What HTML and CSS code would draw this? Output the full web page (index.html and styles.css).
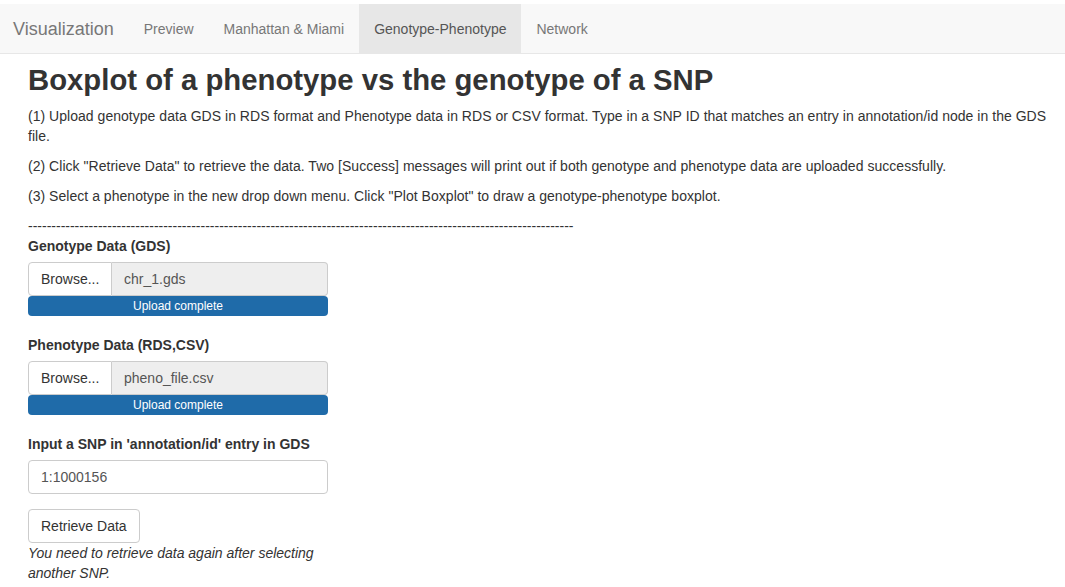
FILE: index.html
```html
<!DOCTYPE html>
<html>
<head>
<meta charset="utf-8">
<link rel="stylesheet" href="styles.css">
</head>
<body>
<nav class="navbar">
  <span class="brand">Visualization</span>
  <ul class="nav">
    <li><a>Preview</a></li>
    <li><a>Manhattan &amp; Miami</a></li>
    <li class="active"><a>Genotype-Phenotype</a></li>
    <li><a>Network</a></li>
  </ul>
</nav>
<main class="content">
  <h2 class="title">Boxplot of a phenotype vs the genotype of a SNP</h2>
  <p>(1) Upload genotype data GDS in RDS format and Phenotype data in RDS or CSV format. Type in a SNP ID that matches an entry in annotation/id node in the GDS file.</p>
  <p>(2) Click "Retrieve Data" to retrieve the data. Two [Success] messages will print out if both genotype and phenotype data are uploaded successfully.</p>
  <p>(3) Select a phenotype in the new drop down menu. Click "Plot Boxplot" to draw a genotype-phenotype boxplot.</p>
  <div class="dashes">---------------------------------------------------------------------------------------------------------------------</div>
  <div class="form-group">
    <label class="lbl">Genotype Data (GDS)</label>
    <div class="file-group">
      <span class="browse">Browse...</span>
      <span class="file-name">chr_1.gds</span>
    </div>
    <div class="progress">Upload complete</div>
  </div>
  <div class="form-group">
    <label class="lbl">Phenotype Data (RDS,CSV)</label>
    <div class="file-group">
      <span class="browse">Browse...</span>
      <span class="file-name">pheno_file.csv</span>
    </div>
    <div class="progress">Upload complete</div>
  </div>
  <div class="form-group text-group">
    <label class="lbl">Input a SNP in 'annotation/id' entry in GDS</label>
    <div class="text-input">1:1000156</div>
  </div>
  <div class="action">
    <span class="btn">Retrieve Data</span>
    <div class="help">You need to retrieve data again after selecting another SNP.</div>
  </div>
</main>
</body>
</html>
```

FILE: styles.css
```css
* { box-sizing: border-box; }
html, body { margin: 0; padding: 0; background: #fff; }
body {
  font-family: "Liberation Sans", Arial, sans-serif;
  font-size: 14px;
  line-height: 20px;
  color: #333;
  padding-top: 4px;
}
.navbar {
  display: flex;
  align-items: stretch;
  height: 50px;
  background: #f8f8f8;
  border-bottom: 1px solid #e7e7e7;
}
.brand {
  font-size: 18px;
  color: #777;
  padding: 1px 15px 0 13px;
  line-height: 48px;
}
.nav {
  display: flex;
  list-style: none;
  margin: 0;
  padding: 0;
}
.nav li a {
  display: block;
  padding: 1px 15px 0;
  line-height: 48px;
  color: #777;
}
.nav li.active a {
  background: #e7e7e7;
  color: #555;
}
.content {
  padding: 0 10px 0 28px;
}
.title {
  font-size: 29.3px;
  font-weight: bold;
  line-height: 33px;
  margin: 9px 0 10px;
  color: #333;
}
p { margin: 0 0 10px; letter-spacing: 0.03px; }
.dashes { line-height: 20px; white-space: nowrap; }
.form-group { width: 300px; margin-bottom: 19px; }
.lbl {
  display: inline-block;
  font-weight: bold;
  margin-bottom: 5px;
  margin-top: 0;
}
.file-group {
  display: flex;
  height: 34px;
  margin-top: 1px;
}
.browse {
  width: 84px;
  border: 1px solid #ccc;
  border-radius: 4px 0 0 4px;
  background: #fff;
  padding: 6px 12px;
  color: #333;
}
.file-name {
  flex: 1;
  border: 1px solid #ccc;
  border-left: none;
  border-radius: 0 4px 4px 0;
  background: #eee;
  padding: 6px 12px;
  color: #555;
}
.progress {
  height: 20px;
  background: #1f6ba9;
  color: #fff;
  font-size: 12px;
  line-height: 20px;
  text-align: center;
  border-radius: 4px;
}
.text-group { margin-bottom: 15px; }
.text-input {
  height: 34px;
  border: 1px solid #ccc;
  border-radius: 4px;
  padding: 6px 12px;
  color: #555;
  margin-top: 1px;
}
.action { width: 300px; }
.btn {
  display: inline-block;
  height: 34px;
  border: 1px solid #ccc;
  border-radius: 4px;
  padding: 6px 12px;
  background: #fff;
  color: #333;
}
.help {
  font-style: italic;
  color: #333;
}
```
